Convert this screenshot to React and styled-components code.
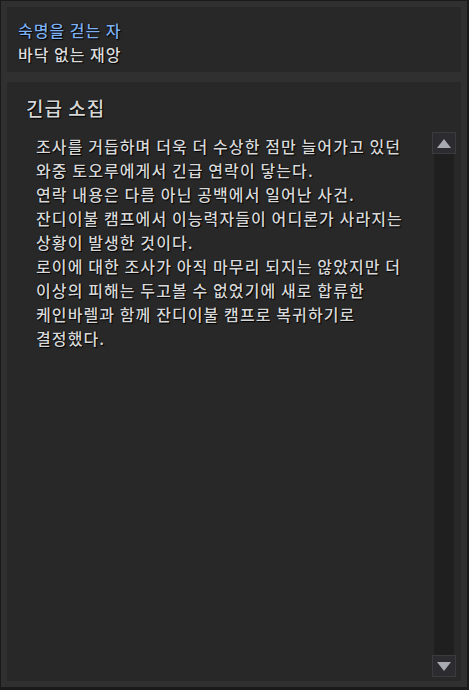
import styled, { createGlobalStyle } from 'styled-components';

const lines = [
  '조사를 거듭하며 더욱 더 수상한 점만 늘어가고 있던',
  '와중 토오루에게서 긴급 연락이 닿는다.',
  '연락 내용은 다름 아닌 공백에서 일어난 사건.',
  '잔디이불 캠프에서 이능력자들이 어디론가 사라지는',
  '상황이 발생한 것이다.',
  '로이에 대한 조사가 아직 마무리 되지는 않았지만 더',
  '이상의 피해는 두고볼 수 없었기에 새로 합류한',
  '케인바렐과 함께 잔디이불 캠프로 복귀하기로',
  '결정했다.',
];

function App() {
  return (
    <>
      <GlobalStyle />
      <Panel>
        <QuestBox>
          <QuestTitle>숙명을 걷는 자</QuestTitle>
          <QuestSub>바닥 없는 재앙</QuestSub>
        </QuestBox>
        <StoryBox>
          <Heading>긴급 소집</Heading>
          <ScrollRow>
            <Story>
              {lines.map((l, i) => (
                <Line key={i}>{l}</Line>
              ))}
            </Story>
            <Scrollbar>
              <ArrowButton>
                <svg width="14" height="9" viewBox="0 0 14 9">
                  <polygon points="7,0 14,9 0,9" fill="#a9a9b1" />
                </svg>
              </ArrowButton>
              <Track />
              <ArrowButton>
                <svg width="14" height="9" viewBox="0 0 14 9">
                  <polygon points="0,0 14,0 7,9" fill="#a9a9b1" />
                </svg>
              </ArrowButton>
            </Scrollbar>
          </ScrollRow>
        </StoryBox>
      </Panel>
    </>
  );
}

export default App;

const GlobalStyle = createGlobalStyle`
  html, body {
    margin: 0;
    background: #1a1a1a;
  }
  body {
    font-family: "Noto Sans CJK KR", "Noto Sans", sans-serif;
  }
`;

const Panel = styled.div`
  box-sizing: border-box;
  width: 466px;
  height: 686px;
  margin: 1px 2px 3px 1px;
  padding: 6px;
  background: #303030;
  display: flex;
  flex-direction: column;
  gap: 10px;
`;

const QuestBox = styled.div`
  box-sizing: border-box;
  height: 65px;
  background: #282828;
  padding: 11px 11px 0;
  display: flex;
  flex-direction: column;
`;

const QuestTitle = styled.div`
  font-size: 16px;
  font-weight: 500;
  letter-spacing: 1px;
  line-height: 24px;
  color: #7eb0f2;
  text-shadow: 1px 1px 1px #000, 0 0 1px #000;
`;

const QuestSub = styled.div`
  font-size: 16px;
  font-weight: 500;
  letter-spacing: 1px;
  line-height: 24px;
  color: #dcdcdc;
  text-shadow: 1px 1px 1px #000, 0 0 1px #000;
`;

const StoryBox = styled.div`
  flex: 1;
  background: #282828;
  display: flex;
  flex-direction: column;
  min-height: 0;
`;

const Heading = styled.div`
  padding: 14px 19px 0;
  font-size: 19px;
  font-weight: 500;
  letter-spacing: 1px;
  line-height: 24px;
  color: #d6d6d6;
  text-shadow: 1px 1px 1px #000, 0 0 1px #000;
`;

const ScrollRow = styled.div`
  flex: 1;
  display: flex;
  margin: 12px 5px 4px 29px;
  min-height: 0;
`;

const Story = styled.div`
  flex: 1;
  padding-top: 2px;
  color: #d8d8d8;
  font-size: 16px;
  font-weight: 500;
  letter-spacing: 1.1px;
  line-height: 24px;
  text-shadow: 1px 1px 1px #000, 0 0 1px #000;
`;

const Line = styled.div`
  white-space: nowrap;
`;

const Scrollbar = styled.div`
  width: 24px;
  display: flex;
  flex-direction: column;
  align-items: center;
`;

const ArrowButton = styled.div`
  box-sizing: border-box;
  width: 24px;
  height: 22px;
  background: #2c2b30;
  border: 1px solid #3b3b3d;
  display: flex;
  align-items: center;
  justify-content: center;
`;

const Track = styled.div`
  flex: 1;
  width: 20px;
  background: #1f1f1f;
`;
